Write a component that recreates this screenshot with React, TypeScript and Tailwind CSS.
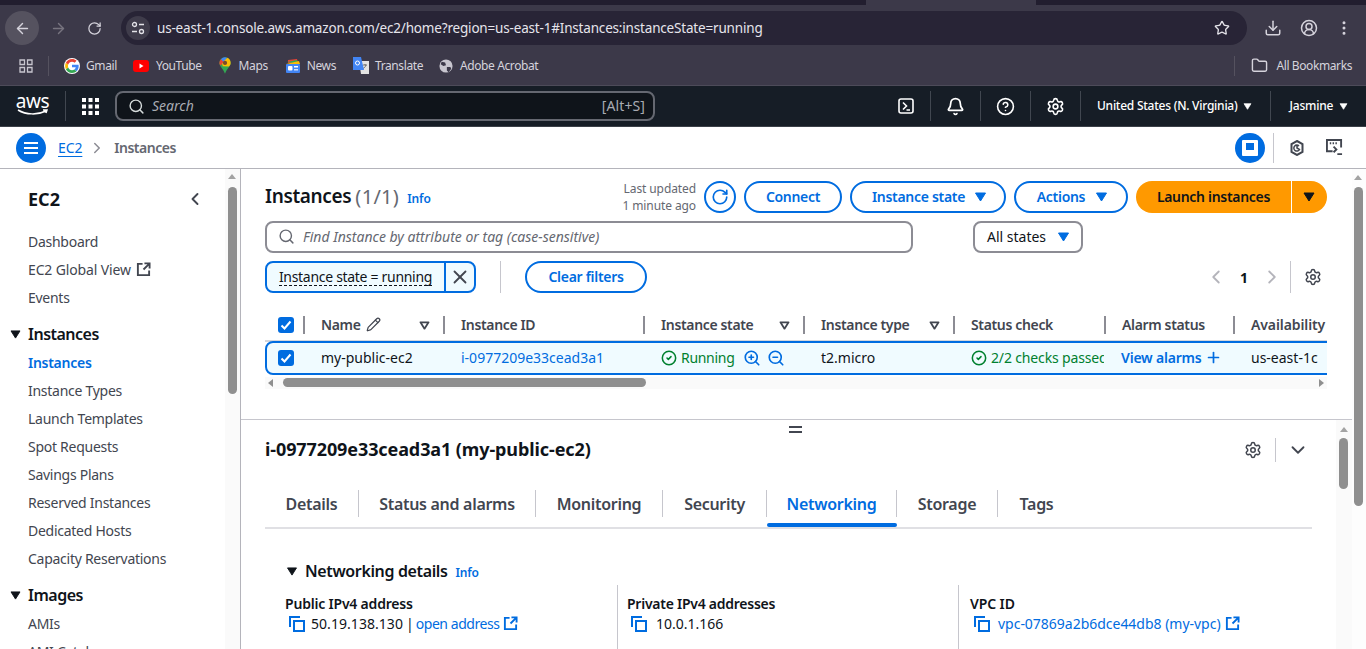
import React from "react";
import { ArrowLeft, ArrowRight, RotateCw, Star, Download, CircleUserRound, EllipsisVertical, Folder, Search, Bell, CircleHelp, Settings, ChevronRight, ChevronLeft, ChevronDown, X, Pencil, CircleCheck, ZoomIn, ZoomOut, Plus } from "lucide-react";

const Caret = ({ className = "" }: { className?: string }) => (
  <svg viewBox="0 0 12 10" className={className} fill="currentColor"><path d="M1 1h10L6 9z" stroke="currentColor" strokeWidth="1" strokeLinejoin="round" /></svg>
);
const SortTri = () => (
  <svg viewBox="0 0 12 10" className="w-[11px] h-[9px] text-[#424650]" fill="none" stroke="currentColor" strokeWidth="2" strokeLinejoin="round"><path d="M1.5 1.5h9L6 8.5z" /></svg>
);
const Ext = ({ className = "" }: { className?: string }) => (
  <svg viewBox="0 0 16 16" className={className} fill="none" stroke="currentColor" strokeWidth="2"><path d="M7 2H2v12h12V9" /><path d="M9 1.5h5.5V7M14 2L8 8" /></svg>
);
const Copy = () => (
  <svg viewBox="0 0 16 16" className="w-4 h-4 text-[#006ce0] shrink-0" fill="none" stroke="currentColor" strokeWidth="2"><path d="M1 11V1h10" /><path d="M5 5h10v10H5z" /></svg>
);
const Check = () => (
  <span className="w-4 h-4 rounded-[3px] bg-[#006ce0] flex items-center justify-center">
    <svg viewBox="0 0 16 16" className="w-4 h-4" fill="none" stroke="#fff" strokeWidth="2"><path d="M3.5 8.5l3 3 6-7" /></svg>
  </span>
);
const Sep = ({ c = "bg-[#8c8c94]" }: { c?: string }) => <span className={`w-[2px] h-[18px] ${c}`} />;

const Pill = ({ children, className = "" }: { children: React.ReactNode; className?: string }) => (
  <div className={`h-8 pb-px rounded-full border-2 border-[#006ce0] text-[#006ce0] font-semibold tracking-[-0.3px] text-[14px] flex items-center justify-center ${className}`}>{children}</div>
);

const Bookmark = ({ icon, label, className = "" }: { icon: React.ReactNode; label: string; className?: string }) => (
  <div className={`flex items-center text-[12px] tracking-[-0.4px] text-[#d5d3dc] ${className}`}>{icon}<span>{label}</span></div>
);

const GoogleG = () => (
  <svg viewBox="0 0 48 48" className="w-4 h-4"><circle cx="24" cy="24" r="24" fill="#fff" /><path fill="#4285F4" d="M44 24.5c0-1.500-.1-2.600-.4-3.900H24v7.300h11.300c-.5 2.700-2 5-4.400 6.500l6.800 5.300C41.700 36 44 30.800 44 24.500z" /><path fill="#34A853" d="M24 45c5.700 0 10.500-1.900 13.700-5.200l-6.800-5.300c-1.800 1.300-4.200 2.100-6.900 2.100-5.300 0-9.800-3.600-11.400-8.400l-7 5.400C8.900 40.300 15.900 45 24 45z" /><path fill="#FBBC05" d="M12.600 28.200c-.9-2.700-.9-5.600 0-8.400l-7-5.400c-3 5.900-3 13.300 0 19.200z" /><path fill="#EA4335" d="M24 11.400c3 0 5.700 1 7.800 3l5.900-5.900C34.500 5 29.700 3 24 3 15.900 3 8.900 7.700 5.600 14.400l7 5.400c1.600-4.800 6.100-8.400 11.400-8.400z" /></svg>
);
const YouTube = () => (
  <svg viewBox="0 0 16 12" className="w-4 h-3"><rect width="16" height="12" rx="3" fill="#f00" /><path d="M6.500 3.500l4 2.500-4 2.500z" fill="#fff" /></svg>
);
const MapsPin = () => (
  <svg viewBox="0 0 16 22" className="w-3 h-[17px]"><path d="M8 0a7.500 7.500 0 017.500 7.500C15.500 12 11 14 8 22 5 14 .5 12 .5 7.500A7.500 7.500 0 018 0z" fill="#34a853" /><path d="M2.500 2.500A7.500 7.500 0 018 0a7.500 7.500 0 013 .7L6 7z" fill="#4285f4" /><path d="M11 .7a7.500 7.500 0 014.500 6.800c0 2-1 3.300-2.200 4.800L5 12 4 8z" fill="#fbbc05" /><path d="M.5 7.500a7.500 7.500 0 012-5L6 6 2.500 11C1.300 10 .5 9 .5 7.500z" fill="#ea4335" /><circle cx="8" cy="7.500" r="2.800" fill="#7b4a2a" /></svg>
);
const News = () => (
  <svg viewBox="0 0 16 16" className="w-4 h-4"><path d="M3 2l9-1 1 4H3z" fill="#ea4335" /><path d="M2 4l10-2 1 4z" fill="#34a853" /><path d="M1 6l13-3 1 3z" fill="#fbbc05" /><rect x="1" y="6" width="14" height="9" rx="1" fill="#4285f4" /><rect x="9" y="8" width="4" height="1.500" fill="#fff" /><rect x="9" y="11" width="4" height="1.500" fill="#cfe0fc" /><rect x="3" y="8" width="4.500" height="4.500" rx="1" fill="#fff" /></svg>
);
const Translate = () => (
  <svg viewBox="0 0 16 18" className="w-4 h-[18px]"><path d="M6 4h10v13H8z" fill="#e3e3e3" /><path d="M10 8h4M12 7v1M13 8c-.5 2-2 3-3 3.500" stroke="#555" strokeWidth=".8" fill="none" /><path d="M0 0h8l3 13H0z" fill="#4285f4" /><circle cx="4.500" cy="6" r="2" fill="none" stroke="#fff" strokeWidth="1" /></svg>
);
const Globe = () => (
  <svg viewBox="0 0 16 16" className="w-[14px] h-[14px]"><circle cx="8" cy="8" r="7.500" fill="#c8c6cf" /><path d="M3 3l4 1 1 3-3 1-3-2zM9 9l4 0 1 2-3 4-2-2z" fill="#3c3949" /></svg>
);

const NavItem = ({ children, className = "" }: { children: React.ReactNode; className?: string }) => (
  <div className={`h-7 flex items-center pl-7 text-[14px] tracking-[-0.27px] text-[#424650] ${className}`}>{children}</div>
);
const NavHead = ({ label }: { label: string }) => (
  <div className="h-7 mt-[9px] flex items-center pl-[10px] gap-[7px] text-[16px] font-semibold tracking-[-0.5px] text-[#0f141a]">
    <Caret className="w-[11px] h-[9px]" /><span>{label}</span>
  </div>
);

const NavDiv = ({ className = "" }: { className?: string }) => <span className={`w-px h-[30px] bg-[#414750] ${className}`} />;

const Cols = ({ children, className = "" }: { children: React.ReactNode; className?: string }) => (
  <div className={`grid grid-cols-[38px_140px_200px_160px_150px_151px_129px_120px] w-[1088px] ${className}`}>{children}</div>
);
const Th = ({ children, tri = false }: { children: React.ReactNode; tri?: boolean }) => (
  <div className="flex items-center h-6 text-[14px] font-semibold tracking-[-0.35px] text-[#424650]">
    <Sep />
    <div className="pl-4 pb-px flex-1 flex items-center whitespace-nowrap overflow-hidden">{children}</div>
    {tri && <span className="mr-[13px] flex"><SortTri /></span>}
  </div>
);
const Tab = ({ label, w, active = false, last = false }: { label: string; w: number; active?: boolean; last?: boolean }) => (
  <div style={{ width: w }} className={`relative h-[37px] pb-[9px] flex items-center justify-center text-[16px] font-semibold tracking-[-0.3px] ${active ? "text-[#006ce0]" : "text-[#424650]"}`}>
    <span className="-ml-px">{label}</span>
    {!last && <span className="absolute right-0 top-0 w-px h-[27px] bg-[#c6c6cd]" />}
    {active && <span className="absolute left-0 right-0 bottom-[0px] h-1 rounded-full bg-[#006ce0]" />}
  </div>
);

export default function App() {
  return (
    <div className="w-[1366px] h-[649px] overflow-hidden flex flex-col relative bg-white font-['Noto_Sans',sans-serif]">
      {/* tab strip */}
      <div className="h-[5px] bg-[#221e2f] flex shrink-0">
        <div className="ml-[866px] w-[170px] h-full bg-[#3c3949]" />
      </div>
      {/* toolbar */}
      <div className="h-[44px] pt-[6px] pb-[4px] bg-[#3c3949] flex items-center shrink-0">
        <div className="ml-[5px] w-[34px] h-[34px] rounded-full bg-[#55525f] flex items-center justify-center text-[#d5d3dc]"><ArrowLeft size={17} /></div>
        <ArrowRight size={17} className="ml-[11px] text-[#77747f]" />
        <RotateCw size={15} className="ml-[20px] text-[#d5d3dc]" />
        <div className="ml-[19px] w-[1126px] h-[34px] rounded-full bg-[#282436] flex items-center pl-[5px] pr-4">
          <div className="w-6 h-6 rounded-full bg-[#3f3c4b] flex items-center justify-center">
            <svg viewBox="0 0 14 14" className="w-[14px] h-[14px]" fill="none" stroke="#e3e2e8" strokeWidth="1.300"><circle cx="3.500" cy="3.500" r="2" /><path d="M8 3.500h5M1 10.500h5" /><circle cx="10.500" cy="10.500" r="2" /></svg>
          </div>
          <span className="ml-[7px] text-[13.5px] text-[#e6e4ec] whitespace-nowrap tracking-[-0.18px]">us-east-1.console.aws.amazon.com/ec2/home?region=us-east-1#Instances:instanceState=running</span>
          <Star size={16} className="ml-auto mr-px text-[#e3e2e8]" />
        </div>
        <Download size={18} className="ml-[17px] text-[#d5d3dc]" />
        <CircleUserRound size={18} className="ml-[18px] text-[#d5d3dc]" />
        <EllipsisVertical size={18} className="ml-[17px] text-[#d5d3dc]" />
      </div>
      {/* bookmarks */}
      <div className="h-[37px] bg-[#3c3949] border-b border-[#4d4b59] flex items-center shrink-0 pb-[3px]">
        <svg viewBox="0 0 14 14" className="ml-[19px] w-[14px] h-[14px]" fill="none" stroke="#c8c6cf" strokeWidth="1.300"><path d="M1 1h4.500v4.500H1zM8.500 1H13v4.500H8.500zM1 8.500h4.500V13H1zM8.500 8.500H13V13H8.500z" /></svg>
        <span className="ml-[15px] w-px h-5 bg-[#55525f]" />
        <Bookmark className="ml-[15px] gap-[6px]" icon={<GoogleG />} label="Gmail" />
        <Bookmark className="ml-[16px] gap-[7px]" icon={<YouTube />} label="YouTube" />
        <Bookmark className="ml-[17px] gap-[8px]" icon={<MapsPin />} label="Maps" />
        <Bookmark className="ml-[17px] gap-[6px]" icon={<News />} label="News" />
        <Bookmark className="ml-[17px] gap-[6px]" icon={<Translate />} label="Translate" />
        <Bookmark className="ml-[16px] gap-[7px]" icon={<Globe />} label="Adobe Acrobat" />
        <span className="ml-auto w-px h-5 bg-[#55525f]" />
        <Bookmark className="ml-[16px] mr-[14px] gap-[8px]" icon={<Folder size={17} className="text-[#d5d3dc]" />} label="All Bookmarks" />
      </div>
      {/* aws nav */}
      <div className="h-[41px] bg-[#161d26] border-b border-[#3b4048] flex items-center shrink-0 text-white">
        <div className="ml-[17px] w-[31px] flex flex-col items-center leading-none">
          <span className="text-[19px] leading-[14px] tracking-[-0.4px] -mt-[3px]">aws</span>
          <svg viewBox="0 0 31 7" className="w-[31px] h-[7px] mt-[1px]" fill="none" stroke="#fff" strokeWidth="1.500"><path d="M1 1c8 5 20 5 28 1M26 1h4l-1 3" /></svg>
        </div>
        <span className="ml-[17px] w-px h-[30px] bg-[#414750]" />
        <svg viewBox="0 0 17 17" className="ml-[16px] w-[17px] h-[17px]" fill="#fff"><path d="M0 0h4v4H0zM6.500 0h4v4h-4zM13 0h4v4h-4zM0 6.500h4v4H0zM6.500 6.500h4v4h-4zM13 6.500h4v4h-4zM0 13h4v4H0zM6.500 13h4v4h-4zM13 13h4v4h-4z" /></svg>
        <div className="ml-[16px] w-[540px] h-[30px] rounded-[8px] border-2 border-[#656871] bg-[#0f141a] flex items-center pl-[11px] pr-[8px]">
          <Search size={17} className="text-[#d5dbdb]" />
          <span className="ml-[7px] pb-px italic text-[14px] text-[#a8abb3]">Search</span>
          <span className="ml-auto pb-px text-[14px] tracking-[0.1px] text-[#a8abb3]">[Alt+S]</span>
        </div>
        <svg viewBox="0 0 16 16" className="ml-[243px] w-[16px] h-[16px]" fill="none" stroke="#fff" strokeWidth="1.600"><rect x="1" y="1" width="14" height="14" rx="2" /><path d="M5 4.500L8.500 8 5 11.500M8.500 12H12" /></svg>
        <NavDiv className="ml-[16px]" />
        <Bell size={19} strokeWidth={2.200} className="ml-[15px]" />
        <NavDiv className="ml-[15px]" />
        <CircleHelp size={19} strokeWidth={2} className="ml-[15px]" />
        <NavDiv className="ml-[15px]" />
        <Settings size={19} strokeWidth={2} className="ml-[15px]" />
        <NavDiv className="ml-[15px]" />
        <span className="ml-[16px] text-[12px] font-medium tracking-[-0.25px] whitespace-nowrap">United States (N. Virginia)</span>
        <Caret className="ml-[6px] w-[9px] h-[7px]" />
        <NavDiv className="ml-[18px]" />
        <span className="ml-[18px] text-[12px] font-medium tracking-[-0.2px]">Jasmine</span>
        <Caret className="ml-[6px] w-[9px] h-[7px]" />
      </div>
      {/* breadcrumb */}
      <div className="h-[42px] bg-white border-b border-[#b4b4bb] flex items-center shrink-0">
        <div className="ml-4 w-[30px] h-[30px] rounded-full bg-[#006ce0] flex items-center justify-center">
          <svg viewBox="0 0 16 14" className="w-4 h-[14px]" fill="none" stroke="#fff" strokeWidth="2"><path d="M1 2h14M1 7h14M1 12h14" /></svg>
        </div>
        <span className="ml-3 text-[14px] tracking-[-0.1px] text-[#006ce0] underline underline-offset-[3px]">EC2</span>
        <ChevronRight size={18} className="ml-[6px] text-[#8c8c94]" />
        <span className="ml-[8px] text-[14px] font-semibold tracking-[-0.5px] text-[#656871]">Instances</span>
        <div className="ml-auto w-[30px] h-[30px] rounded-full bg-[#006ce0] flex items-center justify-center">
          <svg viewBox="0 0 16 16" className="w-4 h-4"><rect width="16" height="16" rx="1" fill="#fff" /><rect x="4" y="3" width="8" height="7" fill="#006ce0" /></svg>
        </div>
        <span className="ml-2 w-px h-[30px] bg-[#c6c6cd]" />
        <svg viewBox="0 0 16 16" className="ml-[15px] w-4 h-4" fill="none" stroke="#424650" strokeWidth="2"><path d="M8 1l5.500 3v8L8 15l-5.500-3V4z" /><path d="M10 6a3 3 0 10.500 3.500L8 8V5.500" strokeWidth="1.500" /></svg>
        <svg viewBox="0 0 18 18" className="ml-[21px] mr-[23px] w-[17px] h-[17px]" fill="none" stroke="#424650" strokeWidth="2"><path d="M7 13H1V1h15v8" /><path d="M4 4.500h1.500M7 4.500h1.500M10 4.500h1.500" /><path d="M8 8l3 3-3 3M12 16h5" /></svg>
      </div>

      <div className="flex-1 flex min-h-0">
        {/* sidebar */}
        <aside className="w-[241px] shrink-0 border-r border-[#b4b4bb] relative overflow-hidden">
          <div className="pt-[16px] h-[58px] flex items-start">
            <div className="h-7 flex items-center pl-7 text-[18px] font-bold text-[#0f141a]">EC2</div>
            <ChevronLeft size={20} strokeWidth={2.300} className="ml-[125px] mt-1 text-[#424650]" />
          </div>
          <NavItem>Dashboard</NavItem>
          <NavItem><span className="tracking-[-0.14px]">EC2 Global View</span><Ext className="ml-[5px] w-[15px] h-[15px]" /></NavItem>
          <NavItem>Events</NavItem>
          <NavHead label="Instances" />
          <NavItem className="!text-[#006ce0] font-semibold">Instances</NavItem>
          <NavItem>Instance Types</NavItem>
          <NavItem>Launch Templates</NavItem>
          <NavItem>Spot Requests</NavItem>
          <NavItem>Savings Plans</NavItem>
          <NavItem>Reserved Instances</NavItem>
          <NavItem>Dedicated Hosts</NavItem>
          <NavItem>Capacity Reservations</NavItem>
          <NavHead label="Images" />
          <NavItem>AMIs</NavItem>
          <NavItem>AMI Catalog</NavItem>
          <div className="absolute right-0 top-0 bottom-0 w-[15px] bg-[#fafafa]">
            <div className="ml-[3px] mt-[5px] w-0 h-0 border-x-[4px] border-x-transparent border-b-[5px] border-b-[#a3a3a3]" />
            <div className="absolute left-[3px] top-[18px] w-[9px] h-[207px] rounded-full bg-[#8f8f8f]" />
          </div>
        </aside>

        {/* main */}
        <main className="flex-1 min-w-0 relative overflow-hidden">
          <section className="h-[251px] border-b border-[#c6c6cd] pl-6 pt-3 overflow-hidden">
            <div className="w-[1062px]">
              <div className="flex items-center h-8">
                <span className="pb-px text-[19px] font-semibold tracking-[-0.35px] text-[#0f141a]">Instances</span>
                <span className="ml-[4px] pb-px text-[20px] tracking-[0.3px] text-[#656871]">(1/1)</span>
                <span className="ml-[8px] mt-[3px] text-[12px] font-semibold tracking-[-0.1px] text-[#006ce0]">Info</span>
                <div className="ml-auto text-right text-[12px] leading-[17px] tracking-[-0.1px] text-[#656871]">Last updated<br />1 minute ago</div>
                <div className="ml-2 w-8 h-8 rounded-full border-2 border-[#006ce0] flex items-center justify-center text-[#006ce0]"><RotateCw size={18} strokeWidth={2.200} /></div>
                <Pill className="ml-2 w-[98px]">Connect</Pill>
                <Pill className="ml-2 w-[156px] gap-[9px] pl-[3px]">Instance state<Caret className="w-[13px] h-[10px]" /></Pill>
                <Pill className="ml-2 w-[114px] gap-[10px] pl-[3px]">Actions<Caret className="w-[13px] h-[10px]" /></Pill>
                <div className="ml-2 w-[155px] h-8 pb-px rounded-l-full bg-[#ff9900] text-[14px] font-semibold tracking-[-0.3px] text-[#0f141a] flex items-center justify-center">Launch instances</div>
                <div className="ml-[1px] w-[35px] h-8 rounded-r-full bg-[#ff9900] flex items-center justify-center pr-[2px]"><Caret className="w-[12px] h-[10px] text-[#0f141a]" /></div>
              </div>
              <div className="flex mt-2">
                <div className="w-[648px] h-8 pb-px rounded-[8px] border-2 border-[#8c8c94] flex items-center pl-[11px]">
                  <Search size={17} className="text-[#656871]" />
                  <span className="ml-[8px] italic text-[14px] text-[#656871]">Find Instance by attribute or tag (case-sensitive)</span>
                </div>
                <div className="ml-[60px] w-[110px] h-8 pb-px rounded-[8px] border-2 border-[#8c8c94] flex items-center pl-[12px] text-[14px] text-[#0f141a]">
                  All states<Caret className="ml-[11px] w-[13px] h-[10px] text-[#006ce0]" />
                </div>
              </div>
              <div className="flex items-center mt-2 h-8">
                <div className="w-[211px] h-8 rounded-[8px] border-2 border-[#006ce0] bg-[#f0fbff] flex">
                  <div className="flex-1 border-r-2 border-[#006ce0] flex items-center justify-center text-[14px] tracking-[-0.3px] text-[#0f141a] whitespace-nowrap">
                    <span className="border-b border-dashed border-[#0f141a] leading-[17px]">Instance state = running</span>
                  </div>
                  <div className="w-[28px] flex items-center justify-center text-[#424650]"><X size={22} strokeWidth={2} /></div>
                </div>
                <span className="ml-6 w-px h-8 bg-[#c6c6cd]" />
                <Pill className="ml-6 w-[122px]">Clear filters</Pill>
                <div className="ml-auto flex items-center">
                  <ChevronLeft size={22} className="text-[#b4b4bb]" />
                  <span className="ml-[12px] w-[10px] text-center text-[14px] font-bold text-[#0f141a]">1</span>
                  <ChevronRight size={22} className="ml-[12px] text-[#b4b4bb]" />
                  <span className="ml-[7px] w-px h-8 bg-[#c6c6cd]" />
                  <Settings size={18} strokeWidth={2} className="ml-[13px] mr-[5px] text-[#424650]" />
                </div>
              </div>
              {/* table */}
              <div className="mt-5 overflow-hidden">
                <Cols>
                  <div className="h-6 flex items-center pl-[13px]"><Check /></div>
                  <Th tri>Name<Pencil size={15} className="ml-[5px]" /></Th>
                  <Th>Instance ID</Th>
                  <Th tri>Instance state</Th>
                  <Th tri>Instance type</Th>
                  <Th>Status check</Th>
                  <Th>Alarm status</Th>
                  <Th><span className="tracking-[-0.1px]">Availability</span></Th>
                </Cols>
                <div className="h-[2px] mt-[3px] bg-[#d6d6da] -mb-[1px]" />
                <div className="h-[34px] w-[1075px] rounded-l-[8px] border-2 border-[#006ce0] bg-[#f0fbff] overflow-hidden">
                  <Cols className="-ml-[2px] -mt-[2px] h-[34px] pb-px items-center text-[14px] text-[#0f141a]">
                    <div className="pl-[13px] flex"><Check /></div>
                    <div className="pl-[18px]">my-public-ec2</div>
                    <div className="pl-[18px] text-[#006ce0]">i-0977209e33cead3a1</div>
                    <div className="pl-[18px] flex items-center text-[#00802f] tracking-[-0.3px]"><CircleCheck size={16} strokeWidth={2.300} /><span className="ml-1">Running</span><ZoomIn size={18} strokeWidth={2.200} className="ml-[9px] text-[#006ce0]" /><ZoomOut size={18} strokeWidth={2.200} className="ml-[6px] text-[#006ce0]" /></div>
                    <div className="pl-[18px]">t2.micro</div>
                    <div className="pl-[18px] flex items-center text-[#00802f] overflow-hidden whitespace-nowrap tracking-[-0.15px]"><CircleCheck size={16} strokeWidth={2.300} className="shrink-0" /><span className="ml-1">2/2 checks passed</span></div>
                    <div className="pl-[17px] flex items-center text-[#006ce0] font-semibold tracking-[-0.2px] whitespace-nowrap">View alarms<Plus size={17} strokeWidth={2.400} className="ml-[3px]" /></div>
                    <div className="pl-[18px]">us-east-1c</div>
                  </Cols>
                </div>
                <div className="mt-[2px] h-[12px] bg-[#fafafa] relative">
                  <div className="absolute left-[3px] top-[2px] w-0 h-0 border-y-[4px] border-y-transparent border-r-[5px] border-r-[#8f8f8f]" />
                  <div className="absolute right-[3px] top-[2px] w-0 h-0 border-y-[4px] border-y-transparent border-l-[5px] border-l-[#8f8f8f]" />
                  <div className="absolute left-[18px] top-[1px] w-[363px] h-[9px] rounded-full bg-[#8f8f8f]" />
                </div>
              </div>
            </div>
          </section>

          <section className="relative pl-6 h-[229px] overflow-hidden">
            <div className="h-[13px] flex flex-col items-center pr-[41px] pt-[6px] gap-[3px]">
              <span className="w-[13px] h-[2px] bg-[#424650]" /><span className="w-[13px] h-[2px] bg-[#424650]" />
            </div>
            <div className="w-[1047px] flex items-center h-8 mt-px">
              <span className="pb-px text-[18px] font-bold tracking-[-0.1px] text-[#0f141a]">i-0977209e33cead3a1 (my-public-ec2)</span>
              <Settings size={18} strokeWidth={2} className="ml-auto -mr-px text-[#424650]" />
              <span className="ml-[14px] w-px h-6 bg-[#c6c6cd]" />
              <ChevronDown size={22} strokeWidth={2} className="ml-[11px] mr-[3px] text-[#424650]" />
            </div>
            <div className="w-[1047px] mt-[24px] border-b-2 border-[#e0e0e4] flex">
              <Tab label="Details" w={94} />
              <Tab label="Status and alarms" w={177} />
              <Tab label="Monitoring" w={127} />
              <Tab label="Security" w={104} />
              <Tab label="Networking" w={130} active />
              <Tab label="Storage" w={101} />
              <Tab label="Tags" w={78} last />
            </div>
            <div className="ml-[21px] mt-[30px] flex items-center h-6">
              <Caret className="w-[12px] h-[9px] text-[#0f141a]" />
              <span className="ml-[7px] pb-px text-[16px] font-semibold tracking-[-0.37px] text-[#0f141a]">Networking details</span>
              <span className="ml-2 mt-[3px] text-[12px] font-semibold tracking-[-0.2px] text-[#006ce0]">Info</span>
            </div>
            <div className="ml-5 mt-[2px] grid grid-cols-[332px_341px_340px]">
              <div className="pt-[9px] h-[72px] border-r border-[#c6c6cd] -mr-px">
                <div className="text-[14px] font-semibold tracking-[-0.2px] text-[#0f141a] leading-[20px]">Public IPv4 address</div>
                <div className="flex items-center h-5 pb-px text-[14px] text-[#0f141a] pl-[4px]"><Copy /><span className="ml-[6px] tracking-[0.05px]">50.19.138.130</span><span className="ml-[3px]">|</span><span className="ml-[2px] text-[#006ce0] tracking-[-0.45px]">open address</span><Ext className="ml-[4px] w-[15px] h-[15px] text-[#006ce0]" /></div>
              </div>
              <div className="pt-[9px] pl-[10px]">
                <div className="text-[14px] font-semibold tracking-[-0.25px] text-[#0f141a] leading-[20px]">Private IPv4 addresses</div>
                <div className="flex items-center h-5 pb-px text-[14px] text-[#0f141a] pl-[4px]"><Copy /><span className="ml-[9px]">10.0.1.166</span></div>
              </div>
              <div className="pt-[9px] pl-[11px] border-l border-[#c6c6cd]">
                <div className="text-[14px] font-semibold tracking-[-0.1px] text-[#0f141a] leading-[20px]">VPC ID</div>
                <div className="flex items-center h-5 pb-px text-[14px] text-[#006ce0] pl-[4px]"><Copy /><span className="ml-[8px] whitespace-nowrap tracking-[-0.02px]">vpc-07869a2b6dce44db8 (my-vpc)</span><Ext className="ml-[4px] w-[15px] h-[15px]" /></div>
              </div>
            </div>
            {/* inner scrollbar */}
            <div className="absolute right-[13px] top-0 bottom-0 w-[17px] bg-[#fafafa]">
              <div className="ml-[4px] mt-[7px] w-0 h-0 border-x-[4px] border-x-transparent border-b-[5px] border-b-[#a3a3a3]" />
              <div className="absolute left-[3px] top-[18px] w-[9px] h-[51px] rounded-full bg-[#8f8f8f]" />
            </div>
          </section>
          {/* outer scrollbar */}
          <div className="absolute right-0 top-0 bottom-0 w-[14px] bg-[#fdfdfd]">
            <div className="ml-[2px] mt-[6px] w-0 h-0 border-x-[4px] border-x-transparent border-b-[5px] border-b-[#a3a3a3]" />
            <div className="absolute left-[2px] top-[18px] w-[9px] h-[319px] rounded-full bg-[#8f8f8f]" />
          </div>
        </main>
      </div>
    </div>
  );
}
